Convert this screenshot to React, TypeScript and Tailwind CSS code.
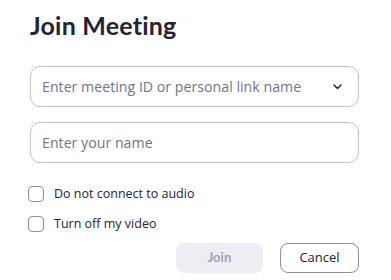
import { useState } from 'react'

export default function App() {
  const [audio, setAudio] = useState(false)
  const [video, setVideo] = useState(false)

  return (
    <div className="w-[391px] h-[280px] bg-white pl-[30px] pr-[32px] pt-[9px] flex flex-col" style={{ fontFamily: '"Open Sans", "Noto Sans", sans-serif' }}>
      {/* Title */}
      <h1 className="text-[25px] leading-[32px] font-bold text-[#232333] tracking-[0.2px]" style={{ fontFamily: 'Lato, sans-serif' }}>
        Join Meeting
      </h1>

      {/* Meeting ID */}
      <div className="mt-[25px] h-[41px] rounded-[10px] border border-[#c1c1cf] flex items-center pl-[11px] pr-[16px]">
        <span className="flex-1 text-[14.2px] text-[#747487]">Enter meeting ID or personal link name</span>
        <svg width="9" height="6" viewBox="0 0 9 6" fill="none">
          <path d="M1 1l3.5 3.5L8 1" stroke="#232333" strokeWidth="1.5" strokeLinecap="round" strokeLinejoin="round" />
        </svg>
      </div>

      {/* Name */}
      <div className="mt-[15px] h-[41px] rounded-[10px] border border-[#c1c1cf] flex items-center pl-[11px]">
        <span className="text-[14.2px] text-[#747487]">Enter your name</span>
      </div>

      {/* Options */}
      <div className="mt-[22px] flex flex-col gap-[13px] -ml-[2px]">
        <label className="h-[17px] flex items-center gap-[10px] cursor-pointer" onClick={() => setAudio(!audio)}>
          <span className={`w-[16px] h-[16px] rounded-[4px] border ${audio ? 'bg-[#0e71eb] border-[#0e71eb]' : 'border-[#8e8e9e]'}`} />
          <span className="text-[12.5px] leading-[17px] text-[#232333]">Do not connect to audio</span>
        </label>
        <label className="h-[17px] flex items-center gap-[10px] cursor-pointer" onClick={() => setVideo(!video)}>
          <span className={`w-[16px] h-[16px] rounded-[4px] border ${video ? 'bg-[#0e71eb] border-[#0e71eb]' : 'border-[#8e8e9e]'}`} />
          <span className="text-[12.5px] leading-[17px] text-[#232333]">Turn off my video</span>
        </label>
      </div>

      {/* Actions */}
      <div className="mt-auto mb-[7px] flex justify-end gap-[17px]">
        <button className="w-[87px] h-[30px] rounded-[8px] bg-[#ededf4] text-[#a0a0ad] text-[13px] font-bold" style={{ fontFamily: 'Lato, sans-serif' }}>
          Join
        </button>
        <button className="w-[79px] h-[30px] rounded-[8px] border border-[#8e8e9e] text-[#232333] text-[13px]">
          Cancel
        </button>
      </div>
    </div>
  )
}
